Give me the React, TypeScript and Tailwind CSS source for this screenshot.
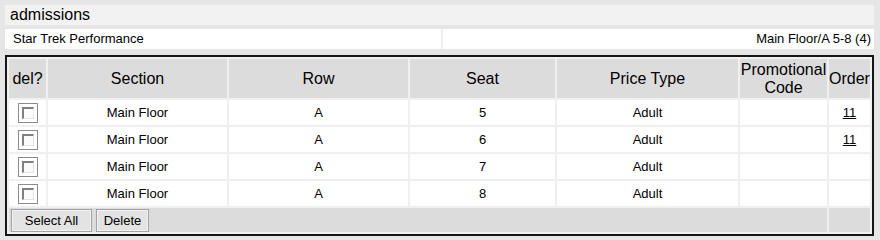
import React from 'react';

const rows = [
  { section: 'Main Floor', row: 'A', seat: '5', priceType: 'Adult', promo: '', order: '11' },
  { section: 'Main Floor', row: 'A', seat: '6', priceType: 'Adult', promo: '', order: '11' },
  { section: 'Main Floor', row: 'A', seat: '7', priceType: 'Adult', promo: '', order: '' },
  { section: 'Main Floor', row: 'A', seat: '8', priceType: 'Adult', promo: '', order: '' },
];

function CheckBox() {
  return (
    <div className="w-[20px] h-[20px] border border-[#8c8c8c] bg-white p-[3px]">
      <div className="w-full h-full border-t-2 border-l-2 border-t-[#808080] border-l-[#808080] border-b border-r border-b-[#e3e3e3] border-r-[#e3e3e3] bg-[#fbfbfb]" />
    </div>
  );
}

function Button({ label, width }: { label: string; width: string }) {
  return (
    <button
      className={`${width} h-[23px] bg-[#e3e3e3] border border-[#a3a3a3] shadow-[inset_0_0_0_1px_#f2f2f2] text-[13px] leading-[21px] text-black`}
    >
      {label}
    </button>
  );
}

export default function App() {
  return (
    <div className="w-[880px] h-[240px] bg-[#e6e6e6] pt-[5px] pl-[5px] pr-[6px] font-['Liberation_Sans',Arial,sans-serif] text-black">
      {/* Title */}
      <div className="h-[20px] bg-[#f2f2f2] pl-[5px] text-[16px] leading-[20px]">admissions</div>

      {/* Event info */}
      <div className="mt-[4px] h-[20px] flex bg-[#f0f0f0] text-[13px] leading-[20px]">
        <div className="w-[436px] bg-white pl-[8px]">Star Trek Performance</div>
        <div className="flex-1 ml-[2px] bg-white text-right pr-[3px]">Main Floor/A 5-8 (4)</div>
      </div>

      {/* Seats table */}
      <table className="mt-[6px] w-[869px] table-fixed border-separate border-spacing-[2px] border-2 border-[#161616] bg-[#f0f0f0]">
        <colgroup>
          <col className="w-[37px]" />
          <col className="w-[179px]" />
          <col className="w-[179px]" />
          <col className="w-[145px]" />
          <col className="w-[181px]" />
          <col className="w-[87px]" />
          <col className="w-[41px]" />
        </colgroup>
        <thead>
          <tr className="h-[39px] bg-[#dcdcdc] text-[16px] leading-[18px]">
            <th className="font-normal p-0">del?</th>
            <th className="font-normal p-0">Section</th>
            <th className="font-normal p-0">Row</th>
            <th className="font-normal p-0">Seat</th>
            <th className="font-normal p-0">Price Type</th>
            <th className="font-normal p-0">Promotional Code</th>
            <th className="font-normal p-0">Order</th>
          </tr>
        </thead>
        <tbody>
          {rows.map((r, i) => (
            <tr key={i} className="h-[25px] bg-white text-[13px] text-center">
              <td className="p-0">
                <div className="flex justify-center">
                  <CheckBox />
                </div>
              </td>
              <td className="p-0">{r.section}</td>
              <td className="p-0">{r.row}</td>
              <td className="p-0">{r.seat}</td>
              <td className="p-0">{r.priceType}</td>
              <td className="p-0">{r.promo}</td>
              <td className="p-0">
                {r.order && <a className="underline text-black">{r.order}</a>}
              </td>
            </tr>
          ))}
          <tr className="h-[24px] bg-[#dcdcdc]">
            <td colSpan={6} className="p-0 pl-[2px]">
              <div className="flex gap-[4px]">
                <Button label="Select All" width="w-[81px]" />
                <Button label="Delete" width="w-[53px]" />
              </div>
            </td>
            <td className="p-0" />
          </tr>
        </tbody>
      </table>
    </div>
  );
}
